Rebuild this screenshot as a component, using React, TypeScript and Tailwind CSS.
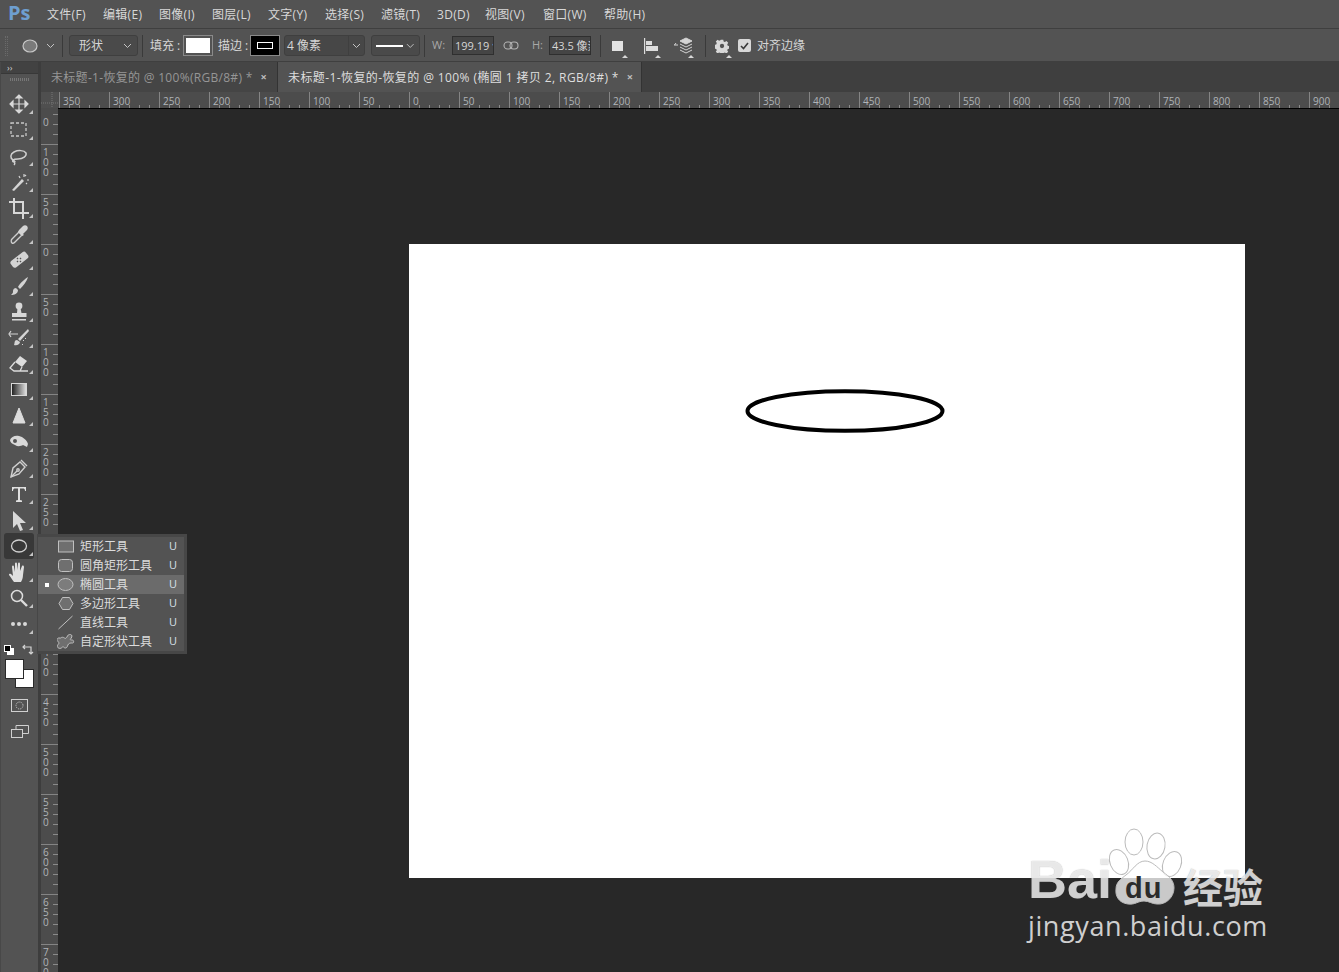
import type { ReactNode } from 'react';

const menus = [
  { label: '文件(F)', cls: 'w-[56px]' },
  { label: '编辑(E)', cls: 'w-[56px]' },
  { label: '图像(I)', cls: 'w-[53px]' },
  { label: '图层(L)', cls: 'w-[56px]' },
  { label: '文字(Y)', cls: 'w-[57px]' },
  { label: '选择(S)', cls: 'w-[56px]' },
  { label: '滤镜(T)', cls: 'w-[56px]' },
  { label: '3D(D)', cls: 'w-[48px]' },
  { label: '视图(V)', cls: 'w-[58px]' },
  { label: '窗口(W)', cls: 'w-[61px]' },
  { label: '帮助(H)', cls: 'w-[60px]' },
];

function Chevron() {
  return (
    <svg width="9" height="6" viewBox="0 0 9 6" fill="none" stroke="#c4c4c4" strokeWidth="1">
      <path d="M1 1l3.5 3.5L8 1" />
    </svg>
  );
}

function Sep({ cls }: { cls: string }) {
  return <div className={`w-px h-[22px] bg-[#3a3a3a] ${cls}`} />;
}

function Flyout() {
  return <div className="absolute right-[-3px] bottom-[-3px] w-0 h-0 border-x-[3px] border-b-[3px] border-x-transparent border-b-[#d8d8d8]" />;
}

function OptionsBar() {
  return (
    <div className="h-[34px] shrink-0 flex items-center pt-[1px] bg-[#535353] border-y border-[#3f3f3f] text-[12px] text-[#d6d6d6]">
      <div className="ml-[5px] w-[3px] h-[20px] border-x border-dotted border-[#6a6a6a]" />
      <svg className="ml-[14px]" width="16" height="14" viewBox="0 0 16 14">
        <ellipse cx="8" cy="7" rx="7" ry="6" fill="#7a7a7a" stroke="#c8c8c8" strokeWidth="1.2" />
      </svg>
      <span className="ml-[8px] flex"><Chevron /></span>
      <Sep cls="ml-[7px]" />
      <div className="ml-[6px] w-[69px] h-[21px] flex items-center justify-between pl-[9px] pr-[5px] rounded-[3px] border border-[#3f3f3f] bg-[#4a4a4a]">
        <span>形状</span><Chevron />
      </div>
      <Sep cls="ml-[4px]" />
      <span className="ml-[7px] w-[33px] whitespace-nowrap">填充 :</span>
      <div className="w-[30px] h-[21px] border border-[#8a8a8a] p-[2px]"><div className="w-full h-full bg-white" /></div>
      <span className="ml-[5px] w-[32px] whitespace-nowrap">描边 :</span>
      <div className="w-[30px] h-[21px] border border-[#8a8a8a] bg-black flex items-center justify-center">
        <div className="w-[16px] h-[7px] border border-white" />
      </div>
      <div className="ml-[4px] w-[81px] h-[21px] flex items-center rounded-[3px] border border-[#3f3f3f] bg-[#474747]">
        <span className="flex-1 pl-[2px] whitespace-nowrap">4 像素</span>
        <span className="w-[16px] h-full flex items-center justify-center border-l border-[#3f3f3f]"><Chevron /></span>
      </div>
      <div className="ml-[6px] w-[49px] h-[21px] flex items-center gap-[3px] px-[4px] rounded-[3px] border border-[#3f3f3f] bg-[#4a4a4a]">
        <div className="w-[29px] h-[2px] bg-white" /><Chevron />
      </div>
      <Sep cls="ml-[4px]" />
      <span className="ml-[7px] w-[20px] text-[11px] text-[#a8a8a8]">W:</span>
      <div className="w-[42px] h-[19px] overflow-hidden whitespace-nowrap border border-[#2f2f2f] bg-[#454545] pl-[2px] text-[11px] leading-[17px]">199.19 像素</div>
      <svg className="ml-[9px]" width="16" height="9" viewBox="0 0 16 9" fill="none" stroke="#b4b4b4" strokeWidth="1.1">
        <rect x="1" y="1" width="8" height="7" rx="3.5" />
        <rect x="7" y="1" width="8" height="7" rx="3.5" />
      </svg>
      <span className="ml-[13px] w-[17px] text-[11px] text-[#a8a8a8]">H:</span>
      <div className="w-[42px] h-[19px] overflow-hidden whitespace-nowrap border border-[#2f2f2f] bg-[#454545] pl-[2px] text-[11px] leading-[17px]">43.5 像素</div>
      <Sep cls="ml-[9px]" />
      <div className="relative ml-[11px] w-[11px] h-[10px] bg-[#e2e2e2]"><div className="absolute right-[-2px] bottom-[-4px]"><Flyout /></div></div>
      <svg className="ml-[21px]" width="15" height="16" viewBox="0 0 15 16" fill="#dcdcdc">
        <rect x="0" width="1.2" height="16" /><rect x="2" y="3" width="6" height="4" /><rect x="2" y="8" width="12" height="5" />
      </svg>
      <div className="relative w-0 h-[16px]"><div className="absolute left-[-1px] bottom-[-1px]"><Flyout /></div></div>
      <svg className="ml-[15px]" width="19" height="18" viewBox="0 0 19 18" fill="none" stroke="#d4d4d4" strokeWidth="1">
        <path d="M0 8h4M2 6v0l-1.5 2M12 1l6 3-6 3-6-3z" fill="#d4d4d4" />
        <path d="M6 7l6 3 6-3M6 10l6 3 6-3M6 13l6 3 6-3" />
      </svg>
      <div className="relative w-0 h-[16px]"><div className="absolute left-[-2px] bottom-[-1px]"><Flyout /></div></div>
      <Sep cls="ml-[12px]" />
      <svg className="ml-[9px]" width="14" height="14" viewBox="0 0 14 14" fill="#d8d8d8">
        <path fillRule="evenodd" d="M5.6 0h2.8l.4 2 1.4.6 1.7-1.1 2 2-1.1 1.7.6 1.4 2 .4v2.8l-2 .4-.6 1.4 1.1 1.7-2 2-1.7-1.1-1.4.6-.4 2H5.6l-.4-2-1.4-.6-1.7 1.1-2-2 1.1-1.7-.6-1.4-2-.4V5.6l2-.4.6-1.4-1.1-1.7 2-2 1.7 1.1 1.4-.6zM7 4.6a2.4 2.4 0 100 4.8 2.4 2.4 0 000-4.8z" transform="translate(.7 .7) scale(.9)" />
      </svg>
      <div className="relative w-0 h-[14px]"><div className="absolute left-0 bottom-[-2px]"><Flyout /></div></div>
      <div className="ml-[9px] w-[13px] h-[13px] rounded-[2px] bg-[#d8d8d8] flex items-center justify-center">
        <svg width="9" height="8" viewBox="0 0 9 8" fill="none" stroke="#3a3a3a" strokeWidth="1.6"><path d="M1 4l2.5 2.5L8 1" /></svg>
      </div>
      <span className="ml-[6px] whitespace-nowrap">对齐边缘</span>
    </div>
  );
}

const s = { fill: 'none', stroke: '#d0d0d0', strokeWidth: 1.5 };
const toolIcons: ReactNode[] = [
  <path key="move" d="M11 3v16M3 11h16M11 2l-3 3h6zM11 20l-3-3h6zM2 11l3-3v6zM20 11l-3-3v6z" fill="#d8d8d8" stroke="#d8d8d8" strokeWidth="1.2" />,
  <rect key="marquee" x="3" y="4" width="15" height="13" fill="none" stroke="#c8c8c8" strokeWidth="1.3" strokeDasharray="3 2" />,
  <path key="lasso" d="M5 15c-3-2-3-6 1-8 4-2 10-2 12 1 1 3-3 6-8 6-2 0-4 0-5 1-1 1 0 2 1 2s1 2 0 3M5 15c1 1 2 1 2 2" {...s} />,
  <g key="wand"><path d="M4 19L14 8l2 2L6 20z" fill="#d4d4d4" /><path d="M16 3v3M18 4l-1 1M11 5l1 2M19 9h2M18 12l1 1" stroke="#d4d4d4" strokeWidth="1.2" /></g>,
  <path key="crop" d="M1 5h3M6 1v15h12M4 5h11v14M15 19v3M18 16h3" fill="none" stroke="#d8d8d8" strokeWidth="2" />,
  <g key="dropper"><path d="M4 20c-1-1-1-3 0-4l7-7 3 3-7 7c-1 1-2 2-3 1z" fill="none" stroke="#cfcfcf" strokeWidth="1.4" /><path d="M11 7l2-2 2-2c1-1 3-1 4 0s1 3 0 4l-4 4 1 1-2 1-4-4 1-2z" fill="#d4d4d4" /></g>,
  <g key="heal"><rect x="2" y="7" width="19" height="8" rx="2.5" transform="rotate(-38 11 11)" fill="#d4d4d4" /><path d="M9 9l1 1M12 9l1 1M9 12l1 1M12 12l1 1" stroke="#555" strokeWidth="1.4" /></g>,
  <path key="brush" d="M20 2c-3 2-8 6-10 10l2 2c3-3 7-8 8-12zM8 13c-3 0-3 3-3 4 0 1-1 2-2 3 3 0 7-1 7-5z" fill="#d4d4d4" />,
  <g key="stamp" fill="#d8d8d8"><circle cx="11" cy="5" r="3.4" /><path d="M9.5 7h3l1 5h5v4H4v-4h5z" /><rect x="4" y="18" width="14" height="1.5" /></g>,
  <g key="history"><path d="M20 2L10 12l2 2L21 4zM9 13c-3 0-2 3-3 5 3 1 6-1 6-3z" fill="#d4d4d4" /><path d="M2 7h8M3 4l-2 3 2 3" fill="none" stroke="#d4d4d4" strokeWidth="1.2" /><path d="M15 13l1 1M17 11l1 1M14 17l1 1" stroke="#d4d4d4" /></g>,
  <g key="eraser"><path d="M12 3l7 5-5 6-7-5z" fill="#dcdcdc" /><path d="M7 9l-5 6 4 3h6l2-4M6 18h14" fill="none" stroke="#dcdcdc" strokeWidth="1.3" /></g>,
  <g key="gradient"><defs><linearGradient id="toolgrad"><stop offset="0" stopColor="#1c1c1c" /><stop offset="1" stopColor="#e4e4e4" /></linearGradient></defs><rect x="3.5" y="4.5" width="15" height="12" fill="url(#toolgrad)" stroke="#d8d8d8" /></g>,
  <path key="cone" d="M11 3l6 15H5z" fill="#dcdcdc" stroke="#dcdcdc" />,
  <path key="smudge" fillRule="evenodd" d="M2 9c1-3 5-5 9-4 4 1 8 4 9 8l-1 3-4-2c-2 1-5 2-8 0-3-1-5-3-5-5zm5-1a2 2 0 100 4 2 2 0 000-4z" fill="#d8d8d8" />,
  <g key="pen" fill="none" stroke="#d0d0d0" strokeWidth="1.4"><path d="M3 20l2-9 7-6 5 5-6 7z" /><path d="M3 20l6-6M13 3l6 6" /><circle cx="10" cy="13" r="1.2" /></g>,
  <path key="type" d="M4 4h14v4h-1c0-2-1-2.5-2-2.5h-3V17l2 .6V19H8v-1.4l2-.6V5.500H7C6 5.500 5 6 5 8H4z" fill="#e0e0e0" />,
  <path key="select" d="M5 2l13 12h-6l3 7-3 1-3-7-4 4z" fill="#d8d8d8" />,
  <ellipse key="ellipse" cx="11" cy="11" rx="7.500" ry="6" fill="none" stroke="#d0d0d0" strokeWidth="1.3" />,
  <path key="hand" d="M6 21c-2-2-3-5-5-7 0-2 2-1 3 0l1 1-1-9c0-2 2-2 2 0l1 5V3c0-2 2-2 2 0v6l1-6c0-2 2-2 2 0v7l2-5c1-1 2 0 2 1l-1 8c0 3-1 5-2 7z" fill="#e0e0e0" />,
  <g key="zoom" fill="none" stroke="#dcdcdc"><circle cx="9" cy="9" r="5.500" strokeWidth="1.5" /><path d="M13 13l6 6" strokeWidth="2.4" /></g>,
  <g key="more" fill="#d8d8d8"><circle cx="5" cy="11" r="2" /><circle cx="11" cy="11" r="2" /><circle cx="17" cy="11" r="2" /></g>,
];

function ToolBar() {
  return (
    <div className="w-[41px] shrink-0 flex flex-col bg-[#535353] border-l border-[#484848] border-r-[3px] border-r-[#3d3d3d]">
      <div className="h-[12px] flex items-center pl-[6px] bg-[#424242] text-[9px] leading-none text-[#cfcfcf] border-b border-[#383838]">››</div>
      <div className="h-[17px] flex justify-center pt-[4px]">
        <div className="w-[20px] h-[3px] bg-[repeating-linear-gradient(90deg,#777_0_1px,transparent_1px_2px)]" />
      </div>
      {toolIcons.map((icon, i) => (
        <div key={i} className={`relative ml-[3px] w-[30px] h-[26px] shrink-0 flex items-center justify-center rounded-[3px] ${i === 17 ? 'bg-[#383838]' : ''}`}>
          <svg width="22" height="22" viewBox="0 0 22 22">{icon}</svg>
          <div className="absolute right-[1px] bottom-[3px] w-0 h-0 border-l-[4px] border-b-[4px] border-l-transparent border-b-[#c4c4c4]" />
        </div>
      ))}
      <div className="relative h-[21px] shrink-0 mt-[1px]">
        <div className="absolute left-[3px] top-[7px] w-[10px] h-[10px]">
          <div className="absolute right-0 bottom-0 w-[7px] h-[7px] bg-white" />
          <div className="absolute left-0 top-0 w-[7px] h-[7px] bg-black border border-white" />
        </div>
        <svg className="absolute left-[21px] top-[6px]" width="12" height="12" viewBox="0 0 12 12" fill="none" stroke="#d4d4d4" strokeWidth="1.2">
          <path d="M1 3h8v7M3 1L1 3l2 2M7 8l2 2 2-2" />
        </svg>
      </div>
      <div className="relative h-[33px] shrink-0">
        <div className="absolute left-[14px] top-[10px] w-[19px] h-[19px] bg-white border border-[#2a2a2a]" />
        <div className="absolute left-[4px] top-0 w-[19px] h-[20px] bg-white border border-[#2a2a2a]" />
      </div>
      <div className="h-[26px] shrink-0 flex items-center justify-center">
        <svg width="17" height="13" viewBox="0 0 17 13" fill="none" stroke="#d0d0d0">
          <rect x=".5" y=".5" width="16" height="12" />
          <circle cx="8.5" cy="6.500" r="3.500" strokeDasharray="1 1" />
        </svg>
      </div>
      <div className="h-[26px] shrink-0 flex items-center justify-center">
        <svg width="18" height="13" viewBox="0 0 18 13" fill="none" stroke="#d0d0d0">
          <rect x=".5" y="4.500" width="11" height="8" />
          <path d="M5 4.500V.5h12.500v8H11.500" />
        </svg>
      </div>
      <div className="flex-1" />
    </div>
  );
}

function Tabs() {
  return (
    <div className="h-[30px] shrink-0 flex items-stretch bg-[#3f3f3f] text-[12px] whitespace-nowrap">
      <div className="w-[237px] flex items-center pl-[10px] pt-[1px] bg-[#454545] text-[#969696] border-r border-[#333] tracking-[0.3px]">
        未标题-1-恢复的 @ 100%(RGB/8#) *
        <span className="ml-[8px] text-[11px] font-bold text-[#bdbdbd]">×</span>
      </div>
      <div className="w-[364px] flex items-center pl-[10px] pt-[1px] bg-[#535353] text-[#dedede] border-r border-[#333] tracking-[0.4px]">
        未标题-1-恢复的-恢复的 @ 100% (椭圆 1 拷贝 2, RGB/8#) *
        <span className="ml-[8px] text-[11px] font-bold text-[#bdbdbd]">×</span>
      </div>
    </div>
  );
}

function TopRuler() {
  const majors = Array.from({ length: 26 }, (_, i) => i * 50 + 18);
  const minors = Array.from({ length: 128 }, (_, i) => i * 10 + 18);
  return (
    <svg className="block shrink-0" width="1298" height="16" viewBox="0 0 1298 16" fontFamily="'Open Sans', sans-serif" fontSize="10">
      <rect width="1298" height="16" fill="#4c4c4c" />
      <rect width="17" height="16" fill="#4f4f4f" />
      <path d="M0 11h17M11 0v16" stroke="#777" strokeDasharray="1 1" />
      {minors.map((x) => <rect key={x} x={x} y="13" width="1" height="3" fill="#8a8a8a" />)}
      {majors.map((x, i) => (
        <g key={x}>
          <rect x={x} y="0" width="1" height="16" fill="#848484" />
          <text x={x + 4} y="13" fill="#b0b4b8">{Math.abs(350 - i * 50)}</text>
        </g>
      ))}
    </svg>
  );
}

function LeftRuler() {
  const labels = [100, 50, 0, 50, 100, 150, 200, 250, 300, 350, 400, 450, 500, 550, 600, 650, 700];
  const minors = Array.from({ length: 90 }, (_, i) => i * 10 - 14);
  return (
    <svg className="block shrink-0" width="17" height="864" viewBox="0 0 17 864" fontFamily="'Open Sans', sans-serif" fontSize="10">
      <rect width="17" height="864" fill="#4c4c4c" />
      {minors.map((y) => <rect key={y} x="12" y={y} width="5" height="1" fill="#8a8a8a" />)}
      <text x="2" y="18" fill="#b0b4b8">0</text>
      {labels.map((n, i) => {
        const y = i * 50 + 36;
        return (
          <g key={i}>
            <rect x="0" y={y} width="17" height="1" fill="#848484" />
            <text y={y + 2} fill="#b0b4b8">
              {String(n).split('').map((d, j) => (
                <tspan key={j} x="2" dy="10">{d}</tspan>
              ))}
            </text>
          </g>
        );
      })}
    </svg>
  );
}

function Watermark() {
  return (
    <div className="absolute left-[1026px] top-[826px] w-[246px] h-[120px] text-white/75 [text-shadow:0_0_1px_rgba(90,90,90,0.55)]">
      <svg className="absolute left-0 top-0" width="246" height="90" viewBox="0 0 246 90">
        <g fill="#ffffff" fillOpacity=".75" stroke="#bbb" strokeWidth="1">
          <ellipse cx="108" cy="16" rx="9" ry="13" />
          <ellipse cx="130" cy="20" rx="9" ry="13" transform="rotate(10 130 20)" />
          <ellipse cx="93" cy="36" rx="9" ry="13" transform="rotate(-22 93 36)" />
          <ellipse cx="146" cy="38" rx="9" ry="13" transform="rotate(22 146 38)" />
          <path d="M119 35c7 0 12 6 18 11 7 5 11 9 11 16 0 9-8 17-17 16-5 0-8-3-13-3-6 0-9 4-16 3-9-1-13-8-12-15 0-7 5-10 10-14 7-5 11-14 19-14z" />
        </g>
      </svg>
      <span className="absolute left-[2px] top-[21px] font-['Liberation_Sans'] font-bold text-[54px] leading-[64px]">Bai</span>
      <span className="absolute left-[99px] top-[46px] font-['Liberation_Sans'] font-bold text-[29px] leading-[32px] tracking-[1px] text-[#2b2b2b] [text-shadow:none]">du</span>
      <span className="absolute left-[157px] top-[38px] font-['Noto_Sans_CJK_SC'] font-bold text-[40px] leading-[44px]">经验</span>
      <span className="absolute left-[2px] top-[82px] font-['Open_Sans'] text-[27px] leading-[36px] tracking-[0.6px] text-[#cfcfcf] [text-shadow:none] whitespace-nowrap">jingyan.baidu.com</span>
    </div>
  );
}

const popupItems: { label: string; icon: ReactNode; active?: boolean }[] = [
  { label: '矩形工具', icon: <rect x="1" y="2" width="15" height="11" fill="#6f6f6f" stroke="#c0c0c0" /> },
  { label: '圆角矩形工具', icon: <rect x="1" y="1.500" width="14" height="12" rx="3" fill="#6f6f6f" stroke="#c0c0c0" /> },
  { label: '椭圆工具', icon: <ellipse cx="8" cy="7.500" rx="7.500" ry="6" fill="#7c7c7c" stroke="#c0c0c0" />, active: true },
  { label: '多边形工具', icon: <path d="M5 1.500h7l3.500 6-3.500 6H5l-3.500-6z" fill="#6f6f6f" stroke="#c0c0c0" /> },
  { label: '直线工具', icon: <path d="M1 14L15 1" fill="none" stroke="#c0c0c0" /> },
  { label: '自定形状工具', icon: <path d="M3 4c1-1 3-1 4 0s2 0 3-2 3-2 4-1 0 3-1 4 1 1 2 1 2 3 0 3-3 0-4 1-1 4-3 4-2-2-3-1-2 2-4 1-1-3 0-4 0-2-1-3-1-2 1-3z" fill="#6f6f6f" stroke="#c0c0c0" /> },
];

function ShapePopup() {
  return (
    <div className="absolute left-[37px] top-[534px] w-[150px] h-[120px] bg-[#535353] border-[3px] border-[#474747] border-l-[1px] z-10 text-[12px] text-[#dcdcdc]">
      {popupItems.map((item) => (
        <div key={item.label} className={`h-[19px] flex items-center ${item.active ? 'bg-[#6b6b6b]' : ''}`}>
          <div className="w-[17px] flex justify-center">
            {item.active && <div className="w-[4px] h-[4px] bg-white" />}
          </div>
          <svg className="ml-[2px] shrink-0" width="18" height="15" viewBox="0 0 17 15">{item.icon}</svg>
          <span className="ml-[5px] flex-1 whitespace-nowrap">{item.label}</span>
          <span className="w-[15px] text-[11px] text-[#d8e0ea]">U</span>
        </div>
      ))}
    </div>
  );
}

export default function App() {
  return (
    <div className="relative w-[1339px] h-[972px] overflow-hidden flex flex-col bg-[#282828] font-['Open_Sans','Noto_Sans_CJK_SC',sans-serif]">
      <div className="h-[28px] shrink-0 flex items-center pt-[1px] bg-[#535353] text-[12px] text-[#d8d8d8] tracking-[0.3px]">
        <span className="w-[47px] pl-[8px] font-['Open_Sans'] font-bold text-[20px] leading-none tracking-normal text-[#6e9fd0] -translate-y-[2px]">Ps</span>
        {menus.map((m) => (
          <span key={m.label} className={`${m.cls} whitespace-nowrap`}>{m.label}</span>
        ))}
      </div>
      <OptionsBar />
      <div className="flex-1 flex min-h-0">
        <ToolBar />
        <div className="flex-1 flex flex-col min-w-0">
          <Tabs />
          <TopRuler />
          <div className="flex-1 flex min-h-0">
            <LeftRuler />
            <div className="flex-1 bg-[#282828] border-t border-black pl-[351px] pt-[135px]">
              <div className="w-[836px] h-[634px] bg-white pl-[336px] pt-[145px]">
                <svg className="block" width="200" height="44" viewBox="0 0 200 44">
                  <ellipse cx="100" cy="22" rx="97.500" ry="19.800" fill="none" stroke="#000" strokeWidth="4" />
                </svg>
              </div>
            </div>
          </div>
        </div>
      </div>
      <ShapePopup />
      <Watermark />
    </div>
  );
}
